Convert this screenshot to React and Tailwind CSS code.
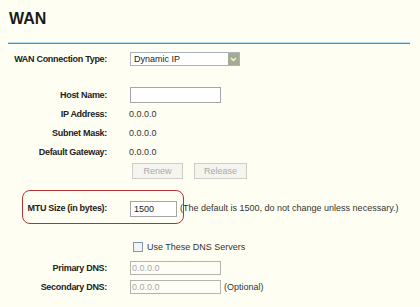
import React from "react";

const Label = ({ children }) => (
  <div className="w-[107px] shrink-0 text-right font-bold tracking-[-0.3px] text-[#222]">
    {children}
  </div>
);

const TextRow = ({ label, value }) => (
  <div className="flex items-center h-[19px]">
    <Label>{label}</Label>
    <div className="ml-[22px] text-[#333]">{value}</div>
  </div>
);

const App = () => {
  return (
    <div className="w-[420px] h-[307px] overflow-hidden bg-[#fffef2] text-[9px] leading-[11px] font-['Liberation_Sans',Arial,sans-serif]">
      {/* title */}
      <div className="h-[42px] pl-[9px] pt-[9px]">
        <h1 className="text-[16px] leading-[20px] font-bold text-[#1a1a1a]">WAN</h1>
      </div>
      <div className="ml-[8px] w-[402px] h-[2px] border-t border-[#b8def0] bg-[#5a8ca6]" />

      {/* connection type */}
      <div className="flex items-center h-[14px] mt-[8px]">
        <Label>WAN Connection Type:</Label>
        <div className="ml-[23px] flex w-[110px] h-[14px] border border-[#a9b4bd] bg-white">
          <span className="flex-1 pl-[3px] text-[#222] leading-[12px]">Dynamic IP</span>
          <span className="w-[11px] h-full bg-[#a3ab90] flex items-center justify-center">
            <svg width="7" height="5" viewBox="0 0 7 5">
              <path d="M1 1 L3.5 3.5 L6 1" stroke="#f4f4ea" strokeWidth="1.4" fill="none" />
            </svg>
          </span>
        </div>
      </div>

      {/* host name */}
      <div className="flex items-center h-[16px] mt-[21px]">
        <Label>Host Name:</Label>
        <div className="ml-[23px] w-[91px] h-[16px] border border-[#a5a5a5] bg-white" />
      </div>

      <div className="mt-[2px]">
        <TextRow label="IP Address:" value="0.0.0.0" />
        <TextRow label="Subnet Mask:" value="0.0.0.0" />
        <TextRow label="Default Gateway:" value="0.0.0.0" />
      </div>

      {/* renew / release */}
      <div className="flex h-[16px] mt-[1px] pl-[132px] gap-[11px]">
        <button className="w-[51px] h-[16px] border border-[#cfcec6] bg-[#f5f4ee] text-[#ababab] text-[9px]">
          Renew
        </button>
        <button className="w-[53px] h-[16px] border border-[#cfcec6] bg-[#f5f4ee] text-[#ababab] text-[9px]">
          Release
        </button>
      </div>

      {/* mtu */}
      <div className="relative flex items-center h-[34px] mt-[11px] pt-[3px]">
        <Label>MTU Size (in bytes):</Label>
        <div className="ml-[23px] w-[47px] h-[16px] border border-[#a5a5a5] bg-white pl-[3px] leading-[14px] text-[#222]">
          1500
        </div>
        <span className="ml-[3px] text-[#333]">
          (The default is 1500, do not change unless necessary.)
        </span>
        <div className="absolute left-[22px] top-0 w-[162px] h-[34px] rounded-[8px] border-[1.5px] border-[#b03434]" />
      </div>

      {/* dns */}
      <div className="flex items-center h-[12px] mt-[17px] pl-[133px]">
        <span className="w-[10px] h-[10px] border border-[#8597aa] bg-[#f3f3f0]" />
        <span className="ml-[4px] text-[#333]">Use These DNS Servers</span>
      </div>
      <div className="flex items-center h-[14px] mt-[8px]">
        <Label>Primary DNS:</Label>
        <div className="ml-[23px] w-[91px] h-[14px] border border-[#b5b5b0] bg-[#fffef6] pl-[1px] leading-[12px] text-[#a8a8a8]">
          0.0.0.0
        </div>
      </div>
      <div className="flex items-center h-[14px] mt-[5px]">
        <Label>Secondary DNS:</Label>
        <div className="ml-[23px] w-[91px] h-[14px] border border-[#b5b5b0] bg-[#fffef6] pl-[1px] leading-[12px] text-[#a8a8a8]">
          0.0.0.0
        </div>
        <span className="ml-[3px] text-[#333]">(Optional)</span>
      </div>
    </div>
  );
};

export default App;
